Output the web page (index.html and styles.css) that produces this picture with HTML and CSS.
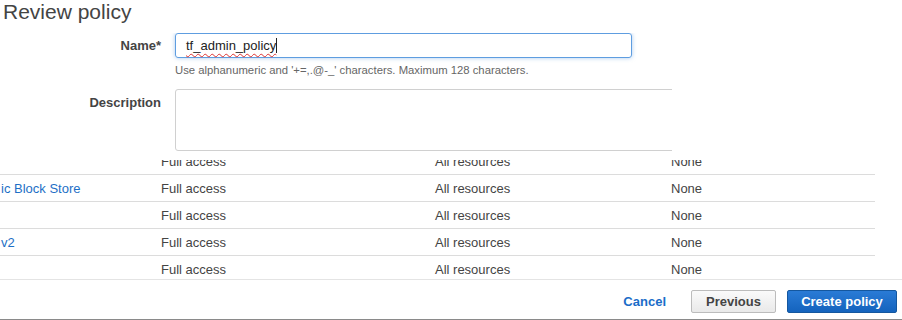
FILE: index.html
```html
<!DOCTYPE html>
<html>
<head>
<meta charset="utf-8">
<link rel="stylesheet" href="styles.css">
</head>
<body>
<h1 class="title">Review policy</h1>
<div class="form">
  <div class="field-row">
    <label class="label label-name">Name*</label>
    <div class="field">
      <div class="input" role="textbox"><span class="misspelled">tf_admin_policy</span><span class="caret"></span></div>
      <div class="hint">Use alphanumeric and '+=,.@-_' characters. Maximum 128 characters.</div>
    </div>
  </div>
  <div class="field-row row-desc">
    <label class="label label-desc" for="desc">Description</label>
    <div class="field">
      <textarea id="desc" class="textarea"></textarea>
    </div>
  </div>
</div>
<div class="table-view">
  <div class="table">
    <div class="trow"><span class="cell"></span><span class="cell">Full access</span><span class="cell">All resources</span><span class="cell">None</span></div>
    <div class="trow"><span class="cell link">ic Block Store</span><span class="cell">Full access</span><span class="cell">All resources</span><span class="cell">None</span></div>
    <div class="trow"><span class="cell"></span><span class="cell">Full access</span><span class="cell">All resources</span><span class="cell">None</span></div>
    <div class="trow"><span class="cell link">v2</span><span class="cell">Full access</span><span class="cell">All resources</span><span class="cell">None</span></div>
    <div class="trow"><span class="cell"></span><span class="cell">Full access</span><span class="cell">All resources</span><span class="cell">None</span></div>
  </div>
</div>
<div class="footer">
  <a class="cancel" href="#">Cancel</a>
  <button class="btn btn-secondary">Previous</button>
  <button class="btn btn-primary">Create policy</button>
</div>
</body>
</html>
```
FILE: styles.css
```css
* { box-sizing: border-box; }
html, body {
  margin: 0;
  padding: 0;
  background: #fff;
  font-family: "Liberation Sans", Arial, sans-serif;
  color: #444;
  overflow: hidden;
}
body { width: 902px; height: 320px; }

.title {
  margin: 0;
  padding-left: 3px;
  font-size: 21px;
  line-height: 24px;
  font-weight: normal;
  color: #444;
}

.form {
  width: 672px;
  overflow: hidden;
  margin-top: 9px;
}
.field-row {
  display: grid;
  grid-template-columns: 161px 1fr;
  column-gap: 14px;
}
.label {
  text-align: right;
  font-weight: bold;
  font-size: 13px;
  color: #444;
}
.label-name { line-height: 25px; }
.label-desc { padding-top: 6px; line-height: 16px; }

.input {
  display: flex;
  align-items: center;
  width: 457px;
  height: 25px;
  padding: 0 10px;
  border: 1px solid #5e9de0;
  border-radius: 3px;
  box-shadow: 0 0 4px rgba(94, 157, 224, 0.55);
  font-size: 13px;
  color: #222;
}
.misspelled {
  text-decoration: underline wavy #d33;
  text-decoration-thickness: 1px;
  text-underline-offset: 3px;
}
.caret {
  display: inline-block;
  width: 1px;
  height: 15px;
  background: #222;
}
.hint {
  margin-top: 6px;
  font-size: 11.3px;
  line-height: 13px;
  color: #666;
}
.row-desc { margin-top: 12px; }
.textarea {
  display: block;
  width: 560px;
  height: 62px;
  margin: 0;
  border: 1px solid #d0d0d0;
  border-radius: 3px;
  resize: none;
}

.table-view {
  height: 119px;
  margin-top: 9px;
  overflow: hidden;
}
.table {
  width: 875px;
  margin-top: -12px;
}
.trow {
  display: grid;
  grid-template-columns: 161px 274px 236px 1fr;
  height: 27px;
  align-items: center;
  border-bottom: 1px solid #dcdcdc;
  font-size: 13px;
  color: #444;
}
.cell { white-space: nowrap; }
.trow .cell:first-child { padding-left: 1px; }
.link { color: #1e6fc6; }

.footer {
  display: flex;
  justify-content: flex-end;
  align-items: center;
  height: 41px;
  padding: 10px 5px 6px 0;
  border-top: 1px solid #e4e4e4;
  border-bottom: 1px solid #8a8a8a;
}
.cancel {
  margin-right: 25px;
  font-size: 13px;
  font-weight: bold;
  color: #1a6dc8;
  text-decoration: none;
}
.btn {
  height: 23px;
  margin: 0;
  padding: 0;
  border-radius: 2px;
  font-family: "Liberation Sans", Arial, sans-serif;
  font-size: 13px;
  font-weight: bold;
  cursor: pointer;
}
.btn-secondary {
  width: 85px;
  margin-right: 11px;
  border: 1px solid #bcbcbc;
  background: linear-gradient(#fafafa, #e9e9e9);
  color: #444;
}
.btn-primary {
  width: 110px;
  border: 1px solid #14579f;
  background: linear-gradient(#2a7bd6, #1463bd);
  color: #fff;
}
```
